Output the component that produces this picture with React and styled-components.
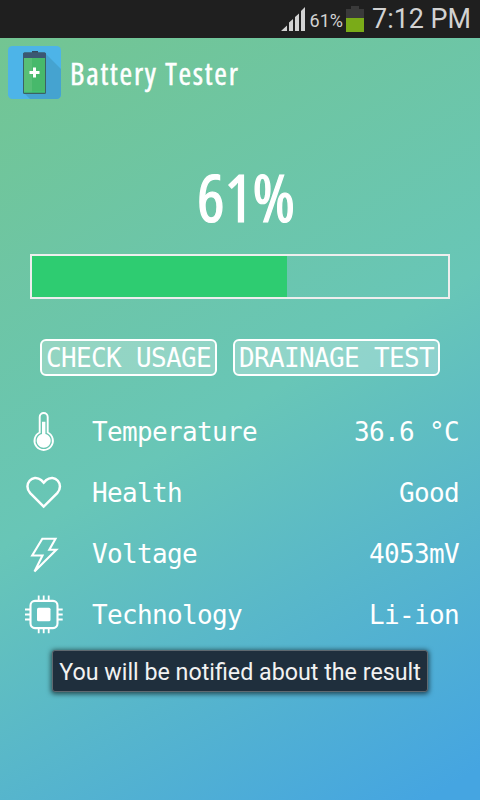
import React from 'react'
import styled, { createGlobalStyle } from 'styled-components'

const details = [
  { label: 'Temperature', value: '36.6 °C', icon: <ThermometerIcon /> },
  { label: 'Health', value: 'Good', icon: <HeartIcon /> },
  { label: 'Voltage', value: '4053mV', icon: <BoltIcon /> },
  { label: 'Technology', value: 'Li-ion', icon: <ChipIcon /> },
]

export default () => {
  const level = 61
  return (
    <Screen>
      <GlobalStyle />
      <StatusBar>
        <SignalIcon />
        <StatusLevel>{`${level}%`}</StatusLevel>
        <StatusBattery />
        <Clock>7:12 PM</Clock>
      </StatusBar>
      <Main>
        <Header>
          <AppIcon />
          <Title>Battery Tester</Title>
        </Header>
        <Level>{`${level}%`}</Level>
        <Track>
          <Fill style={{ width: `${level + 0.3}%` }} />
        </Track>
        <Actions>
          <Button>CHECK USAGE</Button>
          <Button>DRAINAGE TEST</Button>
        </Actions>
        <DetailList>
          {details.map(({ label, value, icon }) => (
            <Detail key={label}>
              {icon}
              <Label>{label}</Label>
              <Value>{value}</Value>
            </Detail>
          ))}
        </DetailList>
      </Main>
      <Toast>You will be notified about the result</Toast>
    </Screen>
  )
}

function SignalIcon() {
  return (
    <svg width="25" height="24" viewBox="0 0 25 24" fill="#d2d2d2">
      <path d="M0 24L6 18.5V24zM8 24V15.500L12 12V24zM14 24V10L18 6.500V24zM20 24V4L24 0V24z" />
    </svg>
  )
}

function StatusBattery() {
  return (
    <svg width="18" height="26" viewBox="0 0 18 26">
      <path d="M5 0h8v3h5v9H0V3h5z" fill="#3a3a3a" />
      <path d="M0 12h18v14H0z" fill="#7aab18" />
    </svg>
  )
}

function AppIcon() {
  return (
    <svg width="53" height="53" viewBox="0 0 53 53">
      <rect width="53" height="53" rx="4.500" fill="#4db4e8" />
      <path d="M38 8L53 23V48.500a4.500 4.500 0 0 1-4.500 4.500H22L15 46z" fill="#45a3d0" />
      <path d="M24 5h6v2h-6z" fill="#34495e" />
      <rect x="15" y="6.500" width="23" height="41.500" rx="1.500" fill="#3c6263" />
      <path d="M15 8q0-1.500 1.500-1.500h20Q38 6.500 38 8v4H15z" fill="#3b5773" />
      <path d="M16 12h8v34.500h-8z" fill="#58bf76" />
      <path d="M24 12h13v34.500H24z" fill="#47b96b" />
      <path d="M16 45.500h21v1H16z" fill="#3fc878" />
      <path d="M25 21.500h3v3.500h3.500v3H28v3.500h-3V28h-3.500v-3H25z" fill="#fff" />
    </svg>
  )
}

function ThermometerIcon() {
  return (
    <Icon>
      <path d="M16.700 21.500V6a4 4 0 0 1 8 0v15.500a9.200 9.200 0 1 1-8 0z" />
      <path d="M19 10.700h3.400v12.200a7 7 0 1 1-3.400 0z" fill="#fff" stroke="none" />
    </Icon>
  )
}

function HeartIcon() {
  return (
    <Icon $stroke={2.5}>
      <path d="M20.700 34.600L7.200 21.100C-.5 12.500 9.500 1 18.500 8.300L20.700 10.700L22.900 8.300C31.900 1 41.900 12.500 34.200 21.100z" />
    </Icon>
  )
}

function BoltIcon() {
  return (
    <Icon $stroke={2.1}>
      <path d="M19.300 5.800H32.500L26.300 16.800H33.300L11.500 38.500L19.500 22.500H9.200z" />
    </Icon>
  )
}

function ChipIcon() {
  return (
    <Icon $stroke={2.1}>
      <rect x="7.500" y="6.900" width="27" height="27.200" rx="4.500" />
      <rect x="14" y="13.700" width="13.500" height="13.500" rx="1.500" fill="#fff" stroke="none" />
      <path
        d="M15.700 1.500V6M20.700 1.500V6M25.700 1.500V6M15.700 35v4.300M20.700 35v4.300M25.700 35v4.300M2 15.500h5M2 20.500h5M2 25.500h5M35 15.500h4.700M35 20.500h4.700M35 25.500h4.700"
        strokeWidth="1.800"
      />
    </Icon>
  )
}

const GlobalStyle = createGlobalStyle`
  body {
    margin: 0;
  }
`

const Screen = styled.div`
  position: relative;
  display: flex;
  flex-direction: column;
  width: 480px;
  height: 800px;
  overflow: hidden;
  color: white;
`

const StatusBar = styled.div`
  display: flex;
  align-items: center;
  justify-content: flex-end;
  height: 38px;
  padding-right: 9px;
  box-sizing: border-box;
  background: #1f1f1f;
  color: #d2d2d2;
  font-family: Roboto, sans-serif;
`

const StatusLevel = styled.span`
  margin: 2px 3px 0 4px;
  font-size: 18px;
`

const Clock = styled.span`
  margin-left: 8px;
  font-size: 26.900px;
  line-height: 36px;
`

const Main = styled.main`
  display: flex;
  flex-direction: column;
  flex: 1;
  background: linear-gradient(150deg, #73c592, #68c6b7 49%, #45a5e1 97%);
`

const Header = styled.header`
  display: flex;
  gap: 9px;
  height: 53px;
  padding: 8px;
`

const Title = styled.h1`
  margin: 0;
  font: 400 30.500px/55px 'Open Sans', sans-serif;
  font-stretch: 75%;
  letter-spacing: 1.780px;
  white-space: nowrap;
  -webkit-text-stroke: 0.5px white;
`

const Level = styled.div`
  margin: 44px 0 0 12px;
  height: 103px;
  font: 400 65px/93px 'Open Sans', sans-serif;
  font-stretch: 75%;
  text-align: center;
  -webkit-text-stroke: 1.2px white;
`

const Track = styled.div`
  height: 41px;
  margin: 0 30px;
  border: 2px solid #eee;
`

const Fill = styled.div`
  height: 100%;
  background: #2ecc71;
`

const Actions = styled.div`
  display: flex;
  justify-content: space-between;
  margin: 40px 40px 0;
`

const Button = styled.button`
  width: ${({ children }) => children.length * 15 + 12}px;
  height: 37px;
  padding: 0 4px;
  border: 2px solid white;
  border-radius: 6px;
  background: rgba(255, 255, 255, 0.27);
  color: white;
  font: 26px/34px 'DejaVu Sans Mono', monospace;
  letter-spacing: -0.653px;
  white-space: nowrap;
`

const DetailList = styled.ul`
  margin: 25px 21px 0 23px;
  padding: 0;
  list-style: none;
`

const Detail = styled.li`
  display: flex;
  align-items: center;
  height: 61px;
  font: 26px/62px 'DejaVu Sans Mono', monospace;
  letter-spacing: -0.653px;
`

const Icon = styled.svg.attrs({ width: 41, height: 41, viewBox: '0 0 41 41' })`
  fill: none;
  stroke: white;
  stroke-width: ${({ $stroke }) => $stroke || 1.9};
`

const Label = styled.span`
  margin-left: 28px;
`

const Value = styled.span`
  margin-left: auto;
`

const Toast = styled.div`
  position: absolute;
  top: 650px;
  left: 52px;
  width: 376px;
  height: 42px;
  box-sizing: border-box;
  border: 1px solid #5f6970;
  border-radius: 3px;
  background: #1f2f3d;
  box-shadow: 0 1px 5px 1px rgba(0, 0, 0, 0.6);
  color: #f2f2f2;
  font: 23.250px/43px Roboto, sans-serif;
  text-align: center;
  white-space: nowrap;
`
